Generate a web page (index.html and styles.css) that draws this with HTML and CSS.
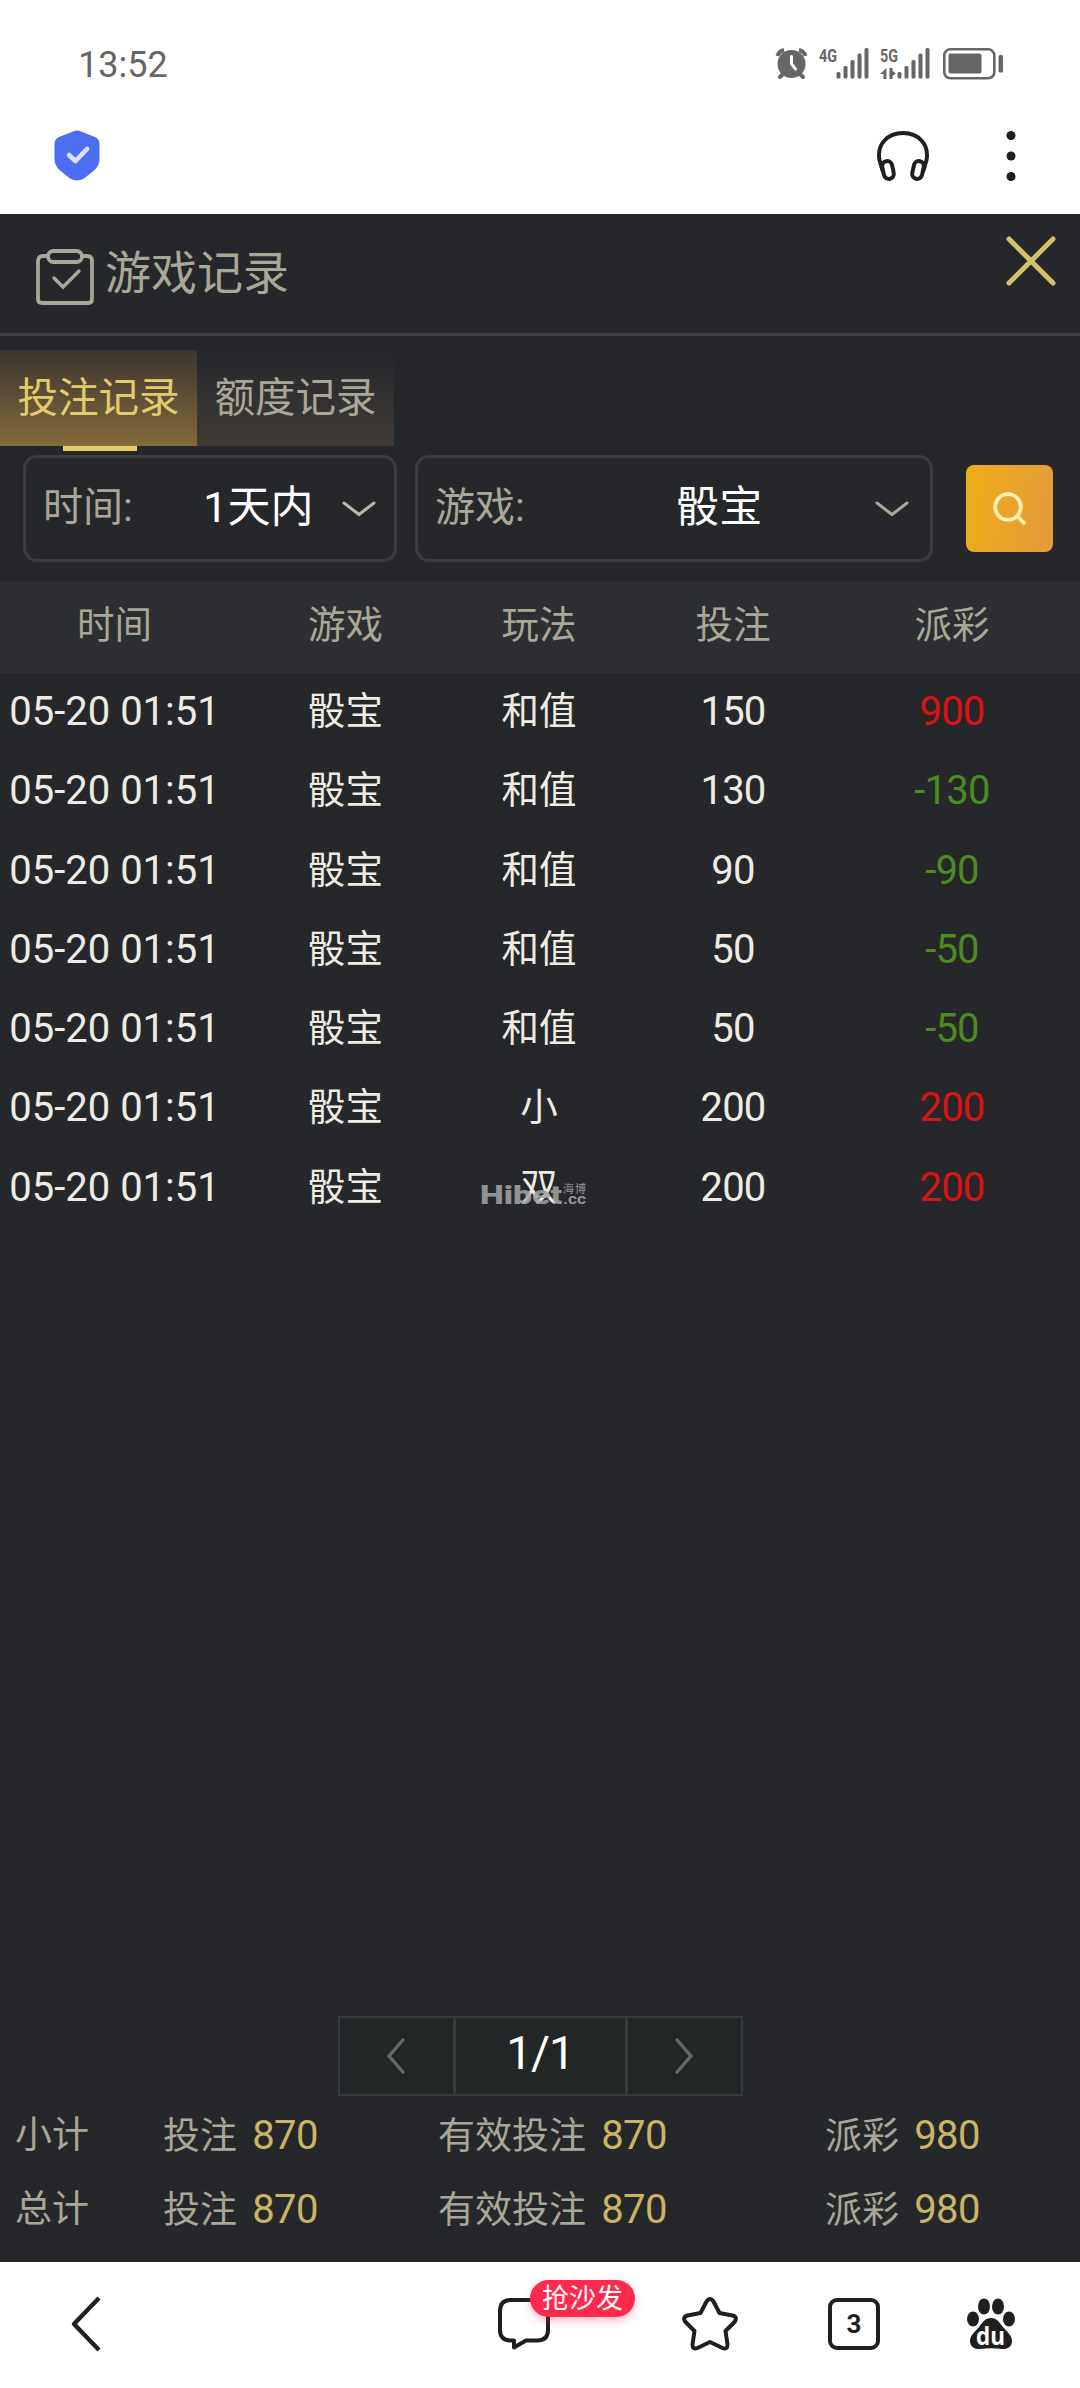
FILE: index.html
```html
<!DOCTYPE html>
<html lang="zh-CN">
<head>
    <meta charset="UTF-8">
    <meta name="viewport" content="width=device-width, initial-scale=1.0">
    <title>游戏记录</title>
    <link rel="stylesheet" href="styles.css">
</head>
<body>
    <div class="phone">
        <!-- 状态栏 -->
        <div class="status-bar">
            <div class="clock">13:52</div>
            <svg class="status-icons" width="230" height="36" viewBox="0 0 230 36">
                <g fill="#666">
                    <circle cx="17.500" cy="18" r="14"/>
                    <path d="M3.500 10 A9 9 0 0 1 10 4" fill="none" stroke="#666" stroke-width="4"/>
                    <path d="M31.500 10 A9 9 0 0 0 25 4" fill="none" stroke="#666" stroke-width="4"/>
                    <path d="M9 28 L6 31 M26 28 L29 31" stroke="#666" stroke-width="4" stroke-linecap="round"/>
                    <path d="M17.500 10.500 V18 L21.500 23" fill="none" stroke="#fff" stroke-width="3" stroke-linecap="round"/>
                    <text x="45" y="16" class="net-label" textLength="18" lengthAdjust="spacingAndGlyphs">4G</text>
                    <rect x="62.500" y="26" width="4" height="6.500" rx="1.500"/>
                    <rect x="69.500" y="20" width="4" height="12.500" rx="1.500"/>
                    <rect x="76.500" y="14" width="4" height="18.500" rx="1.500"/>
                    <rect x="83.500" y="7.500" width="4" height="25" rx="1.500"/>
                    <rect x="90.500" y="2" width="4" height="30.500" rx="1.500"/>
                    <text x="106" y="16" class="net-label" textLength="18" lengthAdjust="spacingAndGlyphs">5G</text>
                    <path d="M112.500 22 V33 H109.500 V28 H106 Z M115.500 22 H118.500 V25 L122 27.500 L118.500 30 V33 H115.500 Z"/>
                    <rect x="123.500" y="26" width="4" height="6.500" rx="1.500"/>
                    <rect x="130.500" y="20" width="4" height="12.500" rx="1.500"/>
                    <rect x="137.500" y="14" width="4" height="18.500" rx="1.500"/>
                    <rect x="144.500" y="7.500" width="4" height="25" rx="1.500"/>
                    <rect x="151.500" y="2" width="4" height="30.500" rx="1.500"/>
                    <rect x="170.300" y="3.300" width="50" height="29" rx="6" fill="none" stroke="#666" stroke-width="2.600"/>
                    <rect x="174.500" y="7.500" width="33" height="20" rx="2"/>
                    <rect x="224.500" y="9" width="4.500" height="17.500" rx="1.500"/>
                </g>
            </svg>
        </div>

        <!-- 浏览器顶栏 -->
        <div class="browser-bar">
            <svg width="46" height="51" viewBox="0 0 46 51">
                <path d="M19 1.500 Q23 -.5 27 1.500 L41 7 Q45.500 9 45.500 14 V29 Q45.500 36 40 40.500 L30 48.500 Q23 52.500 16 48.500 L6 40.500 Q.5 36 .5 29 V14 Q.5 9 5 7 Z" fill="#4e6ef2"/>
                <path d="M15 25 L21.500 31 L33 19" fill="none" stroke="#dbe2fd" stroke-width="4.600" stroke-linecap="round" stroke-linejoin="round"/>
            </svg>
            <div class="browser-actions">
                <svg width="54" height="52" viewBox="0 0 54 52" fill="none" stroke="#1f1f1f" stroke-width="4">
                    <path d="M7 42 L3.500 30 C.5 14 12 3 27 3 C42 3 53.500 14 50.500 30 L47 42"/>
                    <rect x="7" y="31" width="10" height="18" rx="5" transform="rotate(-12 12 40)"/>
                    <rect x="37" y="31" width="10" height="18" rx="5" transform="rotate(12 42 40)"/>
                </svg>
                <svg width="10" height="52" viewBox="0 0 10 52" fill="#1f1f1f">
                    <circle cx="5" cy="5.500" r="4.500"/>
                    <circle cx="5" cy="26" r="4.500"/>
                    <circle cx="5" cy="46.500" r="4.500"/>
                </svg>
            </div>
        </div>

        <main class="panel">
            <div class="panel-header">
                <svg width="58" height="58" viewBox="0 0 58 58" fill="none" stroke="#a9a797" stroke-width="3.800">
                    <path d="M11 7 H7 Q2 7 2 12 V50 Q2 54 6 54 H52 Q56 54 56 50 V12 Q56 7 51 7 H47"/>
                    <rect x="12" y="2" width="34" height="11" rx="5.500"/>
                    <path d="M18 29 L27 38 L43 22" stroke-width="3.400" stroke-linecap="round"/>
                </svg>
                <h1 class="panel-title">游戏记录</h1>
                <svg class="close" width="52" height="52" viewBox="0 0 52 52" stroke="#d3c169" stroke-width="5" stroke-linecap="round">
                    <path d="M4 4 L48 48 M48 4 L4 48"/>
                </svg>
            </div>

            <div class="tabs">
                <div class="tab active">投注记录</div>
                <div class="tab">额度记录</div>
            </div>

            <!-- 筛选 -->
            <div class="filters">
                <div class="select select-time">
                    <span class="select-label">时间:</span>
                    <span class="select-value">1天内</span>
                    <svg width="36" height="18" viewBox="0 0 36 18" fill="none" stroke="#bab8aa" stroke-width="3" stroke-linecap="round">
                        <path d="M3 3 L18 14.500 L33 3"/>
                    </svg>
                </div>
                <div class="select select-game">
                    <span class="select-label">游戏:</span>
                    <span class="select-value">骰宝</span>
                    <svg width="36" height="18" viewBox="0 0 36 18" fill="none" stroke="#a9a797" stroke-width="3" stroke-linecap="round">
                        <path d="M3 3 L18 14.500 L33 3"/>
                    </svg>
                </div>
                <div class="search-btn">
                    <svg width="34" height="34" viewBox="0 0 34 34" fill="none" stroke="#fff0b0" stroke-width="3.800" stroke-linecap="round">
                        <circle cx="15" cy="15" r="12.800"/>
                        <path d="M24.500 24.500 L31 31"/>
                    </svg>
                </div>
            </div>

            <!-- 记录列表 -->
            <div class="records">
                <div class="row head"><span>时间</span><span>游戏</span><span>玩法</span><span>投注</span><span>派彩</span></div>
                <div class="row"><span>05-20 01:51</span><span>骰宝</span><span>和值</span><span>150</span><span class="win">900</span></div>
                <div class="row"><span>05-20 01:51</span><span>骰宝</span><span>和值</span><span>130</span><span class="lose">-130</span></div>
                <div class="row"><span>05-20 01:51</span><span>骰宝</span><span>和值</span><span>90</span><span class="lose">-90</span></div>
                <div class="row"><span>05-20 01:51</span><span>骰宝</span><span>和值</span><span>50</span><span class="lose">-50</span></div>
                <div class="row"><span>05-20 01:51</span><span>骰宝</span><span>和值</span><span>50</span><span class="lose">-50</span></div>
                <div class="row"><span>05-20 01:51</span><span>骰宝</span><span>小</span><span>200</span><span class="win">200</span></div>
                <div class="row"><span>05-20 01:51</span><span>骰宝</span><span>双</span><span>200</span><span class="win">200</span></div>
                <svg class="watermark" width="112" height="28" viewBox="0 0 112 28">
                    <text x="0" y="21" class="wm-name" textLength="82" lengthAdjust="spacingAndGlyphs">Hibet</text>
                    <text x="83" y="10" class="wm-cn" textLength="23">海博</text>
                    <text x="83" y="21" class="wm-cc" textLength="23" lengthAdjust="spacingAndGlyphs">.cc</text>
                </svg>
            </div>

            <div class="pager">
                <div class="pager-btn">
                    <svg width="20" height="38" viewBox="0 0 20 38"><path d="M17 3 L3 19 L17 35"/></svg>
                </div>
                <div class="pager-num">1/1</div>
                <div class="pager-btn">
                    <svg width="20" height="38" viewBox="0 0 20 38"><path d="M3 3 L17 19 L3 35"/></svg>
                </div>
            </div>

            <!-- 合计 -->
            <div class="summary">
                <div class="sum-row"><span>小计</span><span>投注 <b>870</b></span><span>有效投注 <b>870</b></span><span>派彩 <b>980</b></span></div>
                <div class="sum-row"><span>总计</span><span>投注 <b>870</b></span><span>有效投注 <b>870</b></span><span>派彩 <b>980</b></span></div>
            </div>
        </main>

        <!-- 浏览器底栏 -->
        <nav class="bottom-bar">
            <svg class="back" width="32" height="56" viewBox="0 0 32 56" fill="none" stroke="#1f1f1f" stroke-width="4.400" stroke-linejoin="round">
                <path d="M29 2 L4 28 L29 54"/>
            </svg>
            <div class="comment">
                <svg width="54" height="54" viewBox="0 0 54 54" fill="none" stroke="#1f1f1f" stroke-width="4">
                    <path d="M14 3 H40 Q51 3 51 14 V33 Q51 43.500 40 43.500 H29 L17 50.500 V43.500 H14 Q3 43.500 3 33 V14 Q3 3 14 3 Z" stroke-linejoin="round"/>
                </svg>
                <span class="badge">抢沙发</span>
            </div>
            <svg width="56" height="54" viewBox="0 0 56 54" fill="none" stroke="#1f1f1f" stroke-width="4" stroke-linejoin="round">
                <path d="M24.500 4.500 Q28 -.5 31.500 4.500 L37.500 16 L50.500 18.500 Q56 20 52.500 25 L43.500 34 L45.500 47.500 Q45.500 53 40.500 51 L28 45 L15.500 51 Q10.500 53 10.500 47.500 L12.500 34 L3.500 25 Q0 20 5.500 18.500 L18.500 16 Z"/>
            </svg>
            <div class="tab-count">3</div>
            <svg class="paw" width="50" height="54" viewBox="0 0 50 54" fill="#1f1f1f">
                <ellipse cx="18" cy="9.500" rx="6" ry="8"/>
                <ellipse cx="32" cy="9.500" rx="6" ry="8"/>
                <ellipse cx="7" cy="22" rx="6" ry="7.500"/>
                <ellipse cx="43" cy="22" rx="6" ry="7.500"/>
                <path d="M25 21 C31 21 34 26 37 30 C41 35 46 38 46 44 C46 50 41 52.500 36 52 C29 51 21 51 14 52 C9 52.500 4 50 4 44 C4 38 9 35 13 30 C16 26 19 21 25 21 Z"/>
                <text x="10" y="48" class="paw-text" textLength="29" lengthAdjust="spacingAndGlyphs">du</text>
            </svg>
        </nav>
    </div>
</body>
</html>
```
FILE: styles.css
```css
* {
    margin: 0;
    padding: 0;
    box-sizing: border-box;
}

body {
    font-family: Roboto, 'Noto Sans CJK SC', sans-serif;
    background: #fff;
    color: #eeebe3;
}

svg {
    display: block;
    flex-shrink: 0;
}

.phone {
    display: flex;
    flex-direction: column;
    width: 1080px;
    height: 2388px;
    overflow: hidden;
}

/* 状态栏 */
.status-bar {
    display: flex;
    justify-content: space-between;
    align-items: center;
    height: 128px;
    padding: 0 76px 0 78px;
}

.clock {
    padding-top: 1px;
    font-size: 36px;
    color: #666;
}

.status-icons {
    overflow: visible;
}

.net-label {
    font-size: 18px;
    font-weight: bold;
}

.browser-bar {
    display: flex;
    justify-content: space-between;
    height: 86px;
    padding: 2px 64px 0 54px;
}

.browser-actions {
    display: flex;
    gap: 76px;
}

/* 主面板 */
.panel {
    display: flex;
    flex-direction: column;
    height: 2048px;
    background: #26272b;
}

.panel-header {
    display: flex;
    height: 122px;
    padding: 22px 23px 0 36px;
    border-bottom: 3px solid #3f4041;
}

.panel-header > svg:first-child {
    margin-top: 13px;
}

.panel-title {
    margin-left: 11px;
    font-size: 46px;
    font-weight: normal;
    line-height: 74px;
    color: #a9a797;
}

.close {
    margin-left: auto;
    margin-top: -1px;
}

.tabs {
    display: flex;
    margin-top: 14px;
}

.tab {
    position: relative;
    width: 197px;
    height: 96px;
    font-size: 40.5px;
    line-height: 96px;
    text-align: center;
    color: #a9a797;
    background: linear-gradient(#26272b, #3f3a37);
}

.tab.active {
    color: #e3cb6a;
    background: linear-gradient(#3a3630, #85693b);
}

.tab.active::after {
    content: "";
    position: absolute;
    left: 63px;
    bottom: -5px;
    width: 74px;
    height: 5px;
    background: #e3cb6a;
}

.filters {
    display: flex;
    align-items: center;
    margin-top: 9px;
    padding-left: 23px;
}

.select {
    display: flex;
    align-items: center;
    height: 107px;
    padding: 0 17px;
    border: 3px solid #3b3c3e;
    border-radius: 14px;
}

.select-time {
    width: 374px;
}

.select-game {
    width: 518px;
    margin-left: 18px;
    padding-right: 20px;
}

.select-label {
    margin-top: -9px;
    font-size: 40px;
    color: #a9a797;
}

.select-value {
    flex: 1;
    margin-top: -11px;
    font-size: 43px;
    text-align: center;
    color: #fff;
}

.select-time .select-value {
    padding-left: 43px;
}

.select-game .select-value {
    padding-left: 40px;
}

.search-btn {
    display: flex;
    align-items: center;
    justify-content: center;
    width: 87px;
    height: 87px;
    margin-left: 33px;
    border-radius: 8px;
    background: linear-gradient(100deg, #efad17, #e39b3c);
}

/* 记录列表 */
.records {
    position: relative;
    margin-top: 19px;
}

.row {
    display: grid;
    grid-template-columns: 229px 233px 154px 234px 204px;
    height: 79.3px;
    font-size: 40px;
    line-height: 77px;
    text-align: center;
}

.row span:nth-child(2),
.row span:nth-child(3) {
    font-size: 37.5px;
}

.row span:nth-child(4),
.row span:nth-child(5) {
    letter-spacing: -0.8px;
}

.row.head {
    height: 92px;
    font-size: 37.5px;
    line-height: 88px;
    color: #a9a797;
    background: #2d2e31;
}

.row.head span {
    letter-spacing: 0;
}

.win {
    color: #dc1212;
}

.lose {
    color: #4b8b20;
}

.watermark {
    position: absolute;
    left: 480px;
    top: 602px;
    overflow: visible;
    fill: #a4a5a8;
    opacity: .85;
}

.wm-name {
    font-size: 26px;
    font-weight: 900;
}

.wm-cn {
    font-size: 11px;
}

.wm-cc {
    font-size: 14px;
    font-weight: bold;
}

.pager {
    display: flex;
    align-self: center;
    width: 405px;
    height: 80px;
    margin-top: auto;
    border: 2px solid #37393a;
    background: #232627;
}

.pager-btn {
    flex: 1;
    display: flex;
    align-items: center;
    justify-content: center;
}

.pager-btn path {
    fill: none;
    stroke: #66686a;
    stroke-width: 3.4;
    stroke-linecap: round;
}

.pager-num {
    width: 175px;
    border: 3px solid #37393a;
    border-width: 0 3px;
    font-size: 46px;
    line-height: 71px;
    letter-spacing: -1px;
    text-align: center;
    color: #fff;
}

.summary {
    padding: 3px 0 16px 15px;
}

.sum-row {
    display: grid;
    grid-template-columns: 148px 275px 387px 1fr;
    height: 73.5px;
    font-size: 37px;
    line-height: 73px;
    color: #a9a797;
}

.sum-row b {
    margin-left: 6px;
    font-size: 40px;
    font-weight: normal;
    letter-spacing: -0.6px;
    color: #c9b563;
}

/* 底部导航 */
.bottom-bar {
    display: flex;
    align-items: flex-start;
    height: 126px;
    padding: 34px 64px 0 70px;
    background: #fff;
}

.bottom-bar > * {
    margin-top: 1px;
}

.bottom-bar > .back {
    margin-top: 0;
    margin-right: 395px;
}

.comment {
    position: relative;
    margin-right: 131px;
}

.badge {
    position: absolute;
    left: 33px;
    top: -17px;
    width: 105px;
    height: 37px;
    border-radius: 19px;
    background: #ff294d;
    box-shadow: 0 4px 8px rgba(255, 41, 77, 0.3);
    color: #fff;
    font-size: 27px;
    line-height: 38px;
    text-align: center;
    white-space: nowrap;
}

.bottom-bar > .tab-count {
    width: 52px;
    height: 52px;
    margin-top: 2px;
    margin-left: 90px;
    border: 4px solid #1f1f1f;
    border-radius: 9px;
    color: #1f1f1f;
    font-size: 26px;
    font-weight: bold;
    line-height: 44px;
    text-align: center;
}

.paw {
    margin-left: auto;
}

.paw-text {
    fill: #fff;
    font-family: 'Open Sans', sans-serif;
    font-size: 25px;
    font-weight: bold;
}
```
